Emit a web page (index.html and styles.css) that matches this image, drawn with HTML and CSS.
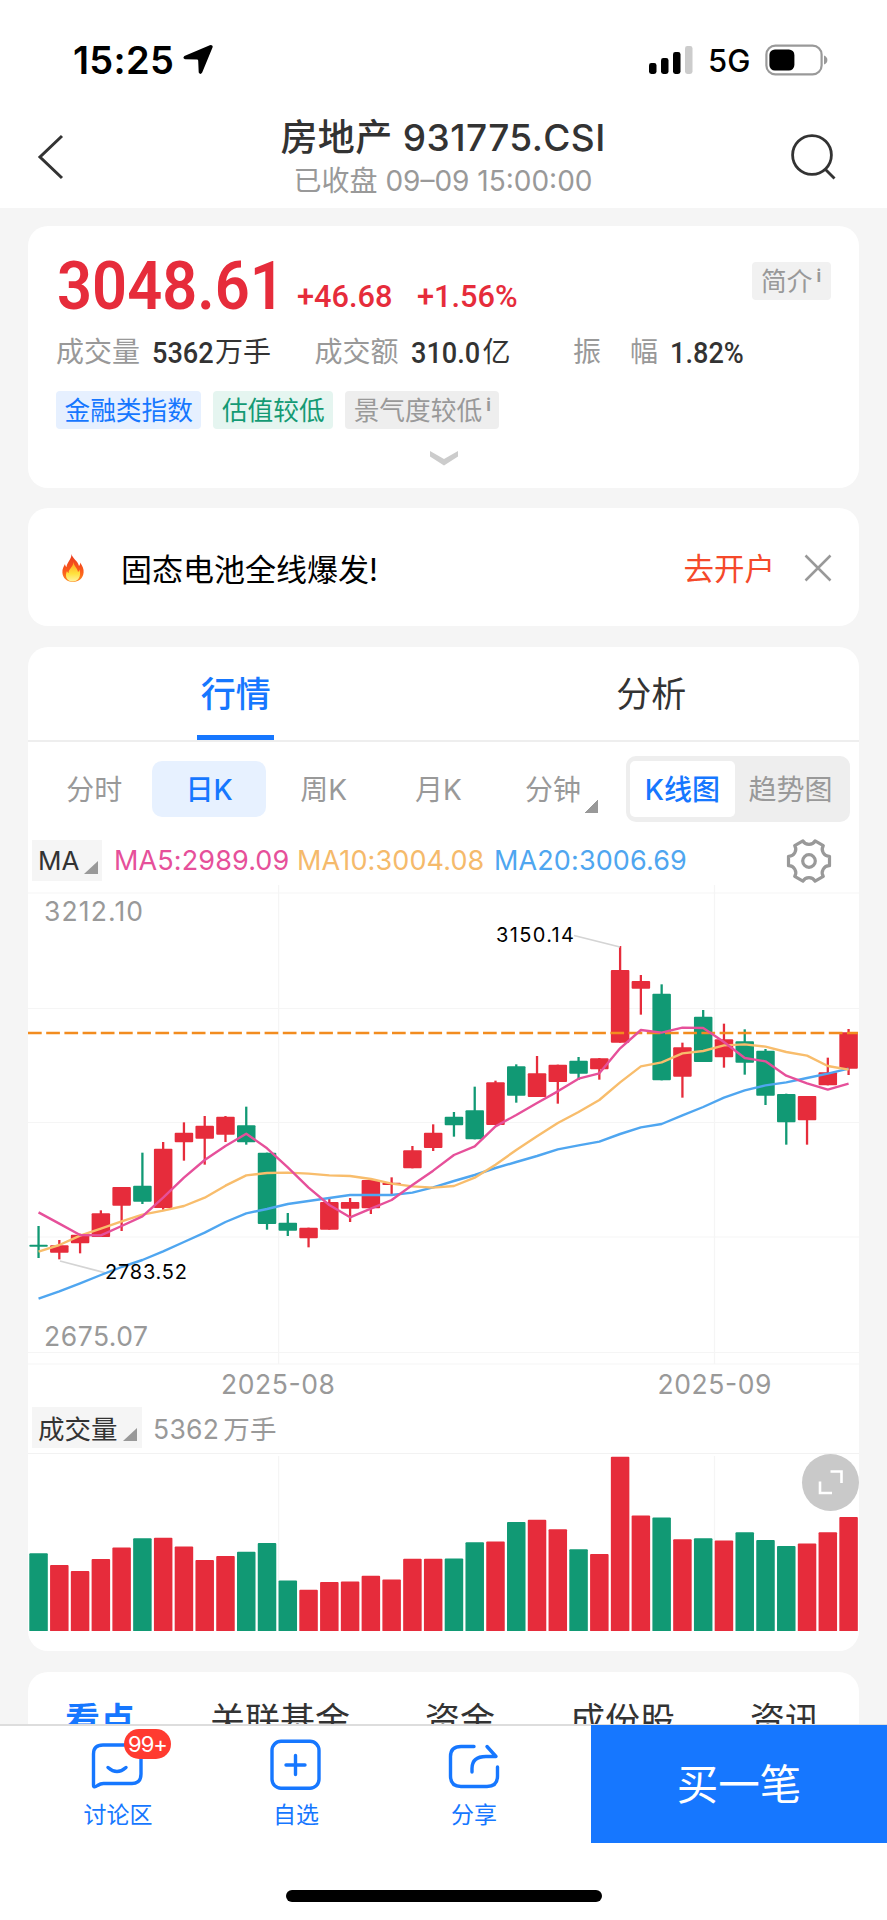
FILE: index.html
```html
<!DOCTYPE html>
<html lang="zh-CN">
<head>
<meta charset="utf-8">
<title>房地产 931775.CSI</title>
<link rel="stylesheet" href="styles.css">
</head>
<body>
<div class="phone">
  <div class="status">
    <span class="clock">15:25</span>
    <svg class="loc" width="30" height="31" viewBox="0 0 30 31"><path d="M28.6 1.2Q30 1.6 29.6 3.2L19.2 28.6Q17.4 31.4 15.7 28.6L15.2 16.6Q15 15.6 14 15.5L2 15.2Q-.8 14.2 1.4 12L26.8 1.2Q27.8.8 28.6 1.2Z"/></svg>
    <span class="grow"></span>
    <svg class="signal" width="44" height="30" viewBox="0 0 44 30"><rect x="0" y="18" width="7.5" height="11" rx="2.4"/><rect x="12" y="13" width="7.5" height="16" rx="2.4"/><rect x="24" y="7" width="7.5" height="22" rx="2.4"/><rect x="36" y="1" width="7.5" height="28" rx="2.4" fill="#ccc"/></svg>
    <span class="net">5G</span>
    <svg class="battery" width="64" height="32" viewBox="0 0 64 32"><rect x="1.4" y="1.6" width="55.2" height="28.8" rx="9" fill="none" stroke="#999" stroke-width="2.2"/><rect x="4.4" y="5.5" width="25" height="21" rx="5.5"/><path d="M59 11.5Q62.4 13 62.4 16T59 20.5Z" fill="#999"/></svg>
  </div>

  <div class="navbar">
    <svg class="back" width="28" height="46" viewBox="0 0 28 46"><path d="M25 2L3 23L25 44" fill="none" stroke="#333" stroke-width="3"/></svg>
    <div class="heading">
      <div class="title">房地产 <span class="code">931775.CSI</span></div>
      <div class="subtitle">已收盘 <span class="time">09–09 15:00:00</span></div>
    </div>
    <svg class="search" width="48" height="48" viewBox="0 0 48 48"><circle cx="22" cy="22" r="19.4" fill="none" stroke="#333" stroke-width="2.8"/><path d="M35.5 36.5L44.5 45.5" stroke="#333" stroke-width="2.8"/></svg>
  </div>

  <div class="content">
    <section class="card quote">
      <div class="price-row">
        <span class="price"><span class="din">3048.61</span></span>
        <span class="change"><span class="din">+46.68</span></span>
        <span class="change pct"><span class="din">+1.56%</span></span>
        <span class="intro">简介<sup>i</sup></span>
      </div>
      <div class="stats">
        <div>成交量<b class="w61"><span class="din">5362</span></b><em>万手</em></div>
        <div>成交额<b class="w70"><span class="din">310.0</span></b><em>亿</em></div>
        <div>振<i></i>幅<b class="w75"><span class="din">1.82%</span></b></div>
      </div>
      <div class="tags">
        <span class="tag blue">金融类指数</span><span class="tag green">估值较低</span><span class="tag gray">景气度较低<sup>i</sup></span>
      </div>
      <svg class="chev" width="30" height="15" viewBox="0 0 30 15"><path d="M1 0L15 8L29 0V5.5L15 14.5L1 5.5Z" fill="#ccc"/></svg>
    </section>

    <section class="card promo">
      <svg width="22" height="28" viewBox="0 0 22 28">
        <defs>
          <linearGradient id="f1" x1="0" y1="0" x2="0" y2="1"><stop offset="0" stop-color="#e8391f"/><stop offset=".6" stop-color="#fb5a1c"/><stop offset="1" stop-color="#fd8a1e"/></linearGradient>
          <linearGradient id="f2" x1="0" y1="0" x2="0" y2="1"><stop offset="0" stop-color="#ffa21f"/><stop offset=".6" stop-color="#ffe23e"/><stop offset="1" stop-color="#fff3a0"/></linearGradient>
        </defs>
        <path d="M9.5 0C10 4 16 7 17 12C18 11 18.2 9.8 18 8.4C20.5 11.5 22 15 21.6 18.5C21 24.5 16.5 28 11 28C5 28 .6 24 .4 18.5C.2 15 1.6 12.5 3 10C3.2 11.5 3.6 12.3 4.5 13C5 8 9.5 5.5 9.5 0Z" fill="url(#f1)"/>
        <path d="M11.5 8C12 12.5 15.5 14 16 18C16.8 17.5 17.2 16.5 17.3 15.5C19 19 18.5 27 11 27.5C4 27.5 2.8 21.5 5 17C5.3 18.2 5.8 18.8 6.6 19C6.5 15 11 13.5 11.5 8Z" fill="url(#f2)"/>
      </svg>
      <span class="promo-text">固态电池全线爆发!</span>
      <span class="open">去开户</span>
      <svg width="28" height="28" viewBox="0 0 28 28"><path d="M1.5 1.5L26.5 26.5M26.5 1.5L1.5 26.5" stroke="#999" stroke-width="2.5"/></svg>
    </section>

    <section class="card market">
      <div class="tabs"><div class="tab on"><span>行情</span></div><div class="tab"><span>分析</span></div></div>
      <div class="periods">
        <div class="period">分时</div><div class="period on">日K</div><div class="period">周K</div><div class="period">月K</div><div class="period more">分钟</div>
        <div class="segment"><div class="on">K线图</div><div>趋势图</div></div>
      </div>
      <div class="ma">
        <span class="pick">MA<svg width="14" height="13" viewBox="0 0 14 13"><path d="M0 13L14 0V13Z" fill="#999"/></svg></span>
        <span class="ma5">MA5:2989.09</span><span class="ma10">MA10:3004.08</span><span class="ma20">MA20:3006.69</span>
        <svg class="gear" width="48" height="48" viewBox="0 0 48 48" fill="none" stroke="#999" stroke-width="3.2" stroke-linejoin="round"><path d="M44.5 28.7A7 7 0 0 0 38.3 39.4L30.1 44.1A7 7 0 0 0 17.9 44.1L9.7 39.4A7 7 0 0 0 3.5 28.7V19.3A7 7 0 0 0 9.7 8.6L17.9 3.9A7 7 0 0 0 30.1 3.9L38.3 8.6A7 7 0 0 0 44.5 19.3Z"/><circle cx="24" cy="24" r="6.3"/></svg>
      </div>
      <svg id="kline" class="plot" width="831" height="518" viewBox="28 885 831 518"></svg>
      <div class="vol-head"><span class="pick">成交量<svg width="14" height="13" viewBox="0 0 14 13"><path d="M0 13L14 0V13Z" fill="#999"/></svg></span><span class="vol">5362<em>万手</em></span></div>
      <div class="volume">
        <svg id="bars" class="plot" width="831" height="178" viewBox="28 1453 831 178"></svg>
        <div class="expand"><svg width="26" height="26" viewBox="0 0 26 26" fill="none" stroke="#fff" stroke-width="2.6"><path d="M12.5 2.5H23.5V14M2 12.5V24H14"/></svg></div>
      </div>
    </section>

    <section class="card sections">
      <span class="on">看点</span><span>关联基金</span><span>资金</span><span>成份股</span><span>资讯</span>
    </section>
  </div>

  <div class="toolbar">
    <div class="actions">
      <div class="action">
        <svg width="54" height="52" viewBox="0 0 54 52"><path d="M12 6H41Q50 6 50 15V35Q50 44.5 41 44.5H12.5Q9.500 44.5 6.500 46.500Q2.500 49.500 2.500 46V15Q2.500 6 12 6Z"/><path d="M17 28.5Q26 36.5 35 28.5"/></svg>
        <span class="badge">99+</span><span>讨论区</span>
      </div>
      <div class="action">
        <svg width="54" height="52" viewBox="0 0 54 52"><rect x="3" y="2.3" width="47" height="47" rx="9"/><path d="M26.5 16.500V35.5M17 26H36"/></svg>
        <span>自选</span>
      </div>
      <div class="action">
        <svg width="54" height="52" viewBox="0 0 54 52"><path d="M27 7.5H14Q3.500 7.5 3.500 17.5V37Q3.500 47.5 14 47.5H40Q50.500 47.5 50.500 37V28"/><path d="M40 7.5L49 17.5H39Q25 17.5 25 29.500V33"/></svg>
        <span>分享</span>
      </div>
    </div>
    <div class="buy">买一笔</div>
  </div>
  <div class="home"><i></i></div>
</div>
<script src="chart.js"></script>
</body>
</html>
```
FILE: styles.css
```css
* { box-sizing: border-box; }
body { margin: 0; font-family: Inter, "Noto Sans CJK SC", sans-serif; color: #333; background: #fff; }
svg { display: block; flex: none; }
em, i { font-style: normal; }
.phone { width: 887px; height: 1920px; display: flex; flex-direction: column; overflow: hidden; }

.status { height: 104px; padding: 15px 58px 0 73px; display: flex; align-items: center; color: #000; }
.clock { font-size: 38px; font-weight: 600; width: 110px; letter-spacing: .3px; white-space: nowrap; }
.grow { flex: 1; }
.net { font-size: 31px; font-weight: 500; margin: 1px 15px 0 15px; width: 42px; }

.navbar { height: 104px; padding: 0 49px 0 37px; display: flex; align-items: flex-start; }
.back { margin-top: 30px; }
.heading { flex: 1; padding-left: 31px; text-align: center; white-space: nowrap; }
.title { font-size: 37px; font-weight: 500; line-height: 44px; margin-top: 12px; letter-spacing: .4px; }
.subtitle { font-size: 28px; line-height: 34px; color: #999; margin-top: 4px; }
.search { margin-top: 29px; }

.content { flex: 1; min-height: 0; overflow: hidden; background: #f5f5f5; padding: 18px 28px 0; display: flex; flex-direction: column; }
.card { flex: none; background: #fff; border-radius: 20px; width: 831px; }

.din { display: inline-block; font-family: Roboto, sans-serif; transform-origin: 0 50%; transform: scaleX(.92); }
.quote { height: 262px; padding: 22px 28px 0; margin-bottom: 20px; }
.price-row { height: 76px; display: flex; align-items: center; color: #e62c3b; white-space: nowrap; }
.price { width: 241px; padding-left: 1px; font-size: 66px; font-weight: 600; line-height: 78px; }
.price .din { transform: scaleX(.93); }
.change { width: 120px; margin-top: 19px; font-size: 32px; font-weight: 500; line-height: 40px; }
.change .din { transform: scaleX(.96); }
.intro { margin-left: auto; align-self: flex-start; margin-top: 14px; height: 38px; width: 79px; padding-left: 9px; line-height: 39px; font-size: 25.7px; color: #999; background: #f1f1f1; border-radius: 4px; }
sup { font-size: 17px; font-weight: 700; line-height: 0; vertical-align: 9px; margin-left: 4px; }
.stats { height: 54px; display: grid; grid-template-columns: 258.5px 258.5px 1fr; line-height: 56px; font-size: 28px; color: #999; white-space: nowrap; }
.stats div { display: flex; }
.stats b { margin-left: 12px; color: #333; font-weight: 500; font-size: 29.5px; }
.stats i { width: 29px; }
.stats em { color: #333; }
.w61 { width: 63px; }
.w70 { width: 72px; }
.w75 { width: 76px; }
.tags { margin-top: 13px; display: flex; gap: 12px; }
.tag { height: 38px; line-height: 40px; font-size: 25.7px; padding: 0 8.5px; border-radius: 4px; white-space: nowrap; }
.tag.blue { color: #1677ff; background: #e6f0ff; }
.tag.green { color: #149a74; background: #e5f5f0; }
.tag.gray { color: #999; background: #eee; }
.chev { margin: 22px auto 0; }

.promo { height: 118px; padding: 0 27px 0 34px; margin-bottom: 21px; display: flex; align-items: center; }
.promo > svg { margin-top: 2px; }
.promo-text { flex: 1; margin-left: 37px; font-size: 31px; color: #000; }
.open { font-size: 30.5px; color: #f5492a; margin-right: 29px; }

.market { height: 1004px; margin-bottom: 21px; }
.tabs { height: 94.5px; display: flex; border-bottom: 2px solid #eee; }
.tab { flex: 1; display: flex; justify-content: center; font-size: 35px; line-height: 95px; }
.tab span { height: 93px; padding: 0 3.5px; }
.tab.on span { color: #1677ff; font-weight: 500; border-bottom: 5px solid #1677ff; }
.periods { height: 94px; padding: 0 9px 0 9px; display: flex; align-items: center; font-size: 28px; color: #999; }
.period { width: 114.7px; height: 56px; line-height: 58px; text-align: center; }
.period.on { color: #1677ff; background: #e7f1ff; border-radius: 10px; font-weight: 500; }
.period.more { background: linear-gradient(135deg, transparent 50%, #999 50%) 88px 38px / 14px 14px no-repeat; }
.segment { margin-left: auto; width: 224px; height: 66px; padding: 5px 4px; display: flex; background: #eee; border-radius: 10px; line-height: 58px; white-space: nowrap; }
.segment div { flex: 1; text-align: center; }
.segment .on { flex: 0 0 105px; height: 56px; color: #1677ff; background: #fff; border-radius: 5px; font-weight: 500; }
.ma { height: 49px; padding-top: 1px; display: flex; align-items: center; font-size: 27px; letter-spacing: .12px; padding-left: 4px; white-space: nowrap; }
.pick { height: 41px; background: #f5f5f5; color: #333; display: flex; align-items: center; }
.pick svg { margin-top: 13px; }
.ma .pick { width: 70px; padding: 0 4px 0 6px; justify-content: space-between; font-size: 26px; }
.ma5 { color: #e6509a; margin-left: 12px; width: 183px; }
.ma10 { color: #f5ba6b; width: 197px; }
.ma20 { color: #4fa6f0; }
.gear { margin-left: auto; margin-right: 26px; }
.plot text { font-family: Inter, sans-serif; }
.vol-head { height: 50px; display: flex; align-items: center; padding-left: 4px; font-size: 26.5px; white-space: nowrap; }
.vol-head .pick { width: 110px; padding: 0 5px 0 6px; justify-content: space-between; }
.vol { color: #999; margin-left: 11px; letter-spacing: .3px; }
.vol em { margin-left: 4px; }
.volume { position: relative; }
.expand { position: absolute; right: 0; top: 1px; width: 57px; height: 57px; border-radius: 50%; background: #c9c9c9; display: flex; align-items: center; justify-content: center; }

.sections { height: 130px; padding: 24px 39px 0 37px; display: flex; justify-content: space-between; font-size: 35px; line-height: 48px; }
.sections .on { color: #1677ff; font-weight: 700; }

.toolbar { height: 119px; border-top: 2px solid #ddd; display: flex; background: #fff; }
.actions { width: 591px; padding-left: 29px; display: flex; }
.action { position: relative; width: 178px; padding-top: 13px; display: flex; flex-direction: column; align-items: center; font-size: 23px; line-height: 30px; color: #1677ff; }
.action svg { fill: none; stroke: #1677ff; stroke-width: 3.4; stroke-linecap: round; stroke-linejoin: round; margin-bottom: 9px; }
.badge { position: absolute; left: 95px; top: 3px; width: 47px; height: 30px; border-radius: 15px; background: #ff3b30; color: #fff; font-size: 22px; line-height: 31px; text-align: center; letter-spacing: -1px; }
.buy { flex: 1; margin-top: -1px; background: #1677ff; color: #fff; font-size: 41.5px; line-height: 120px; text-align: center; }
.home { height: 77px; padding-top: 47px; background: #fff; }
.home i { display: block; width: 316px; height: 12px; margin: 0 auto; border-radius: 6px; background: #000; }
```
FILE: chart.js
```js
const RED = '#e62c3b', GREEN = '#119974';
const X0 = 29.3, STEP = 20.77, W = 18.5;
const mid = i => X0 + STEP * i + W / 2;
const y = v => 930 + v / 3;

// kind, high, top, bottom, low
const candles = [
  ['G',888,944,950,984],['R',930,946,968,988],['R',911,914,940,970],['R',841,850,921,921],['R',771,771,827,903],
  ['G',668,767,815,822],['R',636,656,834,839],['R',577,608,637,692],['R',558,587,626,704],['R',558,560,614,636],
  ['G',530,586,637,644],['G',668,668,882,899],['G',849,878,902,918],['R',893,893,925,952],['R',806,816,899,899],
  ['R',804,816,836,876],['R',750,750,835,852],['R',742,758,765,795],['R',648,661,715,715],['R',583,608,654,663],
  ['G',546,560,586,620],['G',470,541,628,628],['R',452,457,585,585],['G',403,409,497,518],['R',378,430,501,501],
  ['R',404,404,456,521],['G',381,392,431,450],['R',384,385,418,449],['R',48,120,338,338],['R',135,153,176,254],
  ['G',163,191,451,451],['R',338,352,440,503],['G',240,260,396,396],['R',281,328,382,413],['G',298,334,398,434],
  ['G',357,362,497,525],['G',491,492,577,644],['R',498,498,571,644],['R',383,427,466,466],['R',297,307,416,435]
];
const ma5 = [847,881,915,916,888,859,803,743,690,648,611,655,712,773,825,862,836,810,765,722,675,649,589,555,519,484,446,430,355,300,308,293,294,336,384,394,437,460,479,461];
const ma10 = [965,945,917,896,874,854,842,828,803,767,736,729,728,731,736,738,747,761,769,773,768,743,704,660,619,579,546,510,457,409,397,370,363,346,343,350,366,377,408,419];
const ma20 = [1106,1084,1060,1035,1011,990,964,936,908,876,850,837,822,813,804,795,795,795,788,772,753,735,714,696,678,658,646,635,612,592,582,556,531,503,481,466,457,444,431,416];
const volumes = [1553.3,1565,1571,1559,1547.5,1538.3,1537.8,1546.5,1560,1556,1551.7,1543,1580.5,1589.8,1582,1581.6,1575.8,1579.6,1558.8,1558.8,1558.6,1542.3,1541.5,1522,1519.8,1529.3,1549.3,1554,1456.7,1515.5,1517.5,1539.3,1538.3,1540.5,1532.3,1540,1546,1543.6,1532.3,1517];

const line = (a, b, c, d, color, w, extra = '') => `<path d="M${a} ${b}L${c} ${d}" fill="none" stroke="${color}" stroke-width="${w}" ${extra}/>`;
const rect = (x, top, h, color) => `<rect x="${x}" y="${top}" width="${W}" height="${h}" rx="1" fill="${color}"/>`;
const curve = (vals, color) => `<polyline fill="none" stroke="${color}" stroke-width="2.4" stroke-linejoin="round" points="${vals.map((v, i) => mid(i) + ',' + y(v)).join(' ')}"/>`;
const label = (x, base, size, color, len, s) => `<text x="${x}" y="${base}" font-size="${size}" fill="${color}" textLength="${len}">${s}</text>`;

let k = '';
[893, 1008.5, 1122.5, 1237, 1352.5, 1364].forEach(v => k += line(28, v, 859, v, '#f5f5f5', 1.2));
[278.6, 714.5].forEach(v => k += line(v, 885, v, 1364, '#f5f5f5', 1.2));
candles.forEach(([t, hi, top, bot, lo], i) => {
  const c = t === 'R' ? RED : GREEN;
  k += line(mid(i), y(hi), mid(i), y(lo), c, 2.3);
  k += rect(X0 + STEP * i, y(top), (bot - top) / 3, c);
});
k += line(28, 1033, 858, 1033, '#f28c1f', 2.7, 'stroke-dasharray="13.7 4.5"');
k += line(574, 935.5, 620, 947, '#d4d4d4', 1.8) + line(60, 1261, 106, 1273, '#d4d4d4', 1.8);
k += curve(ma20, '#4fa6f0') + curve(ma10, '#f8bd6c') + curve(ma5, '#e6509a');
k += label(44, 920.5, 26.5, '#999', 99, '3212.10') + label(44, 1346, 26.5, '#999', 104, '2675.07');
k += label(496, 942, 20, '#000', 78, '3150.14') + label(105, 1279.3, 20, '#000', 82, '2783.52');
k += label(221, 1393.5, 26.5, '#999', 114, '2025-08') + label(657.5, 1393.5, 26.5, '#999', 114, '2025-09');
document.getElementById('kline').innerHTML = k;

let b = line(28, 1453.5, 859, 1453.5, '#f2f2f2', 1.2);
[278.6, 714.5].forEach(v => b += line(v, 1456, v, 1631, '#f5f5f5', 1.2));
volumes.forEach((v, i) => b += rect(X0 + STEP * i, v, 1631.5 - v, candles[i][0] === 'R' ? RED : GREEN));
document.getElementById('bars').innerHTML = b;
```
